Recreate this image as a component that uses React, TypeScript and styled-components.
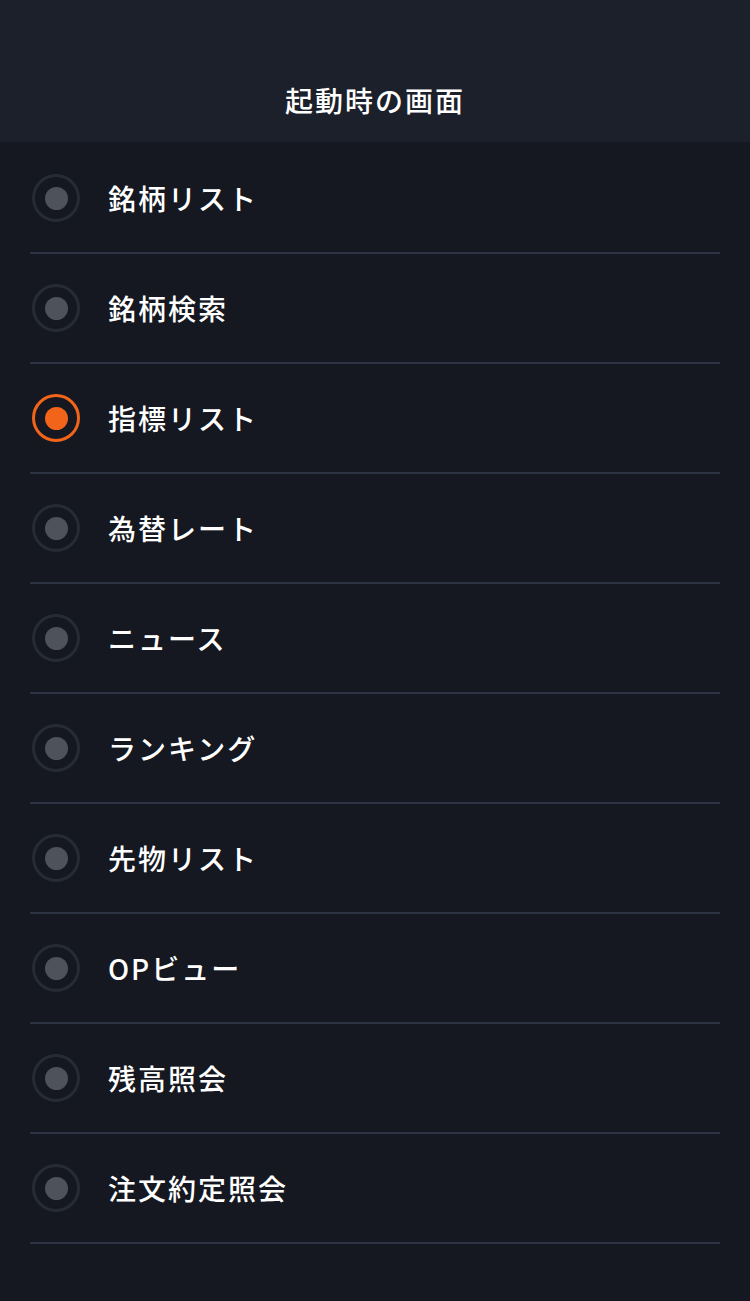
import React, { useState } from "react";
import styled, { createGlobalStyle } from "styled-components";

const GlobalStyle = createGlobalStyle`
  html, body {
    margin: 0;
    padding: 0;
    background: #151820;
  }
  * { box-sizing: border-box; }
`;

const Page = styled.div`
  width: 750px;
  min-height: 1301px;
  background: #151820;
  font-family: "Noto Sans CJK JP", "Noto Sans", sans-serif;
  color: #ffffff;
`;

const Header = styled.header`
  height: 142px;
  background: #1c202b;
  display: flex;
  align-items: flex-end;
  justify-content: center;
  padding-bottom: 22px;
`;

const Title = styled.h1`
  margin: 0;
  font-size: 28px;
  font-weight: 500;
  letter-spacing: 2px;
  line-height: 40px;
`;

const List = styled.ul`
  list-style: none;
  margin: 0;
  padding: 2px 30px 0;
`;

const Row = styled.li`
  height: 110px;
  border-bottom: 2px solid #2d3342;
  display: flex;
  align-items: center;
  gap: 28px;
  cursor: pointer;
`;

const Radio = styled.span<{ $checked: boolean }>`
  width: 48px;
  height: 48px;
  border-radius: 50%;
  border: 3px solid ${(p) => (p.$checked ? "#f26419" : "#262b36")};
  display: flex;
  align-items: center;
  justify-content: center;
  flex-shrink: 0;
  margin-left: 2px;

  &::after {
    content: "";
    width: 23px;
    height: 23px;
    border-radius: 50%;
    background: ${(p) => (p.$checked ? "#f26419" : "#4e525b")};
  }
`;

const Label = styled.span`
  font-size: 28px;
  font-weight: 500;
  letter-spacing: 2px;
  line-height: 40px;
`;

const items = [
  "銘柄リスト",
  "銘柄検索",
  "指標リスト",
  "為替レート",
  "ニュース",
  "ランキング",
  "先物リスト",
  "OPビュー",
  "残高照会",
  "注文約定照会",
];

export default function App() {
  const [selected, setSelected] = useState(2);
  return (
    <Page>
      <GlobalStyle />
      <Header>
        <Title>起動時の画面</Title>
      </Header>
      <List>
        {items.map((label, i) => (
          <Row key={label} onClick={() => setSelected(i)}>
            <Radio $checked={selected === i} />
            <Label>{label}</Label>
          </Row>
        ))}
      </List>
    </Page>
  );
}
